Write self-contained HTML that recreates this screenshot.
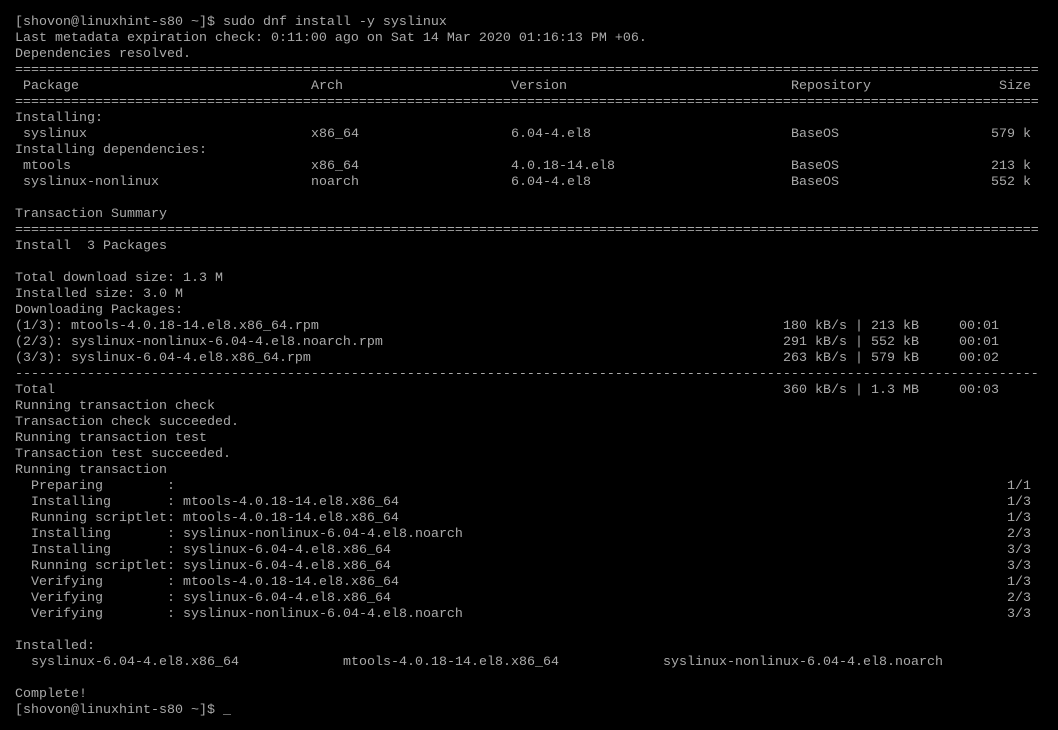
<!DOCTYPE html>
<html><head><meta charset="utf-8"><style>
html,body{margin:0;padding:0;background:#000;width:1058px;height:730px;overflow:hidden}
.t{position:absolute;left:0;top:15px;width:1058px;font-family:"Liberation Mono","DejaVu Sans Mono",monospace;font-size:13.333px;color:#aaaaaa;line-height:16px}
.l{position:relative;height:16px;white-space:pre}
.l span{position:absolute;top:0}
.r{right:27px}
</style></head><body><div class="t">
<div class="l"><span style="left:15px">[shovon@linuxhint-s80 ~]$ sudo dnf install -y syslinux</span></div>
<div class="l"><span style="left:15px">Last metadata expiration check: 0:11:00 ago on Sat 14 Mar 2020 01:16:13 PM +06.</span></div>
<div class="l"><span style="left:15px">Dependencies resolved.</span></div>
<div class="l"><span style="left:15px">================================================================================================================================</span></div>
<div class="l"><span style="left:23px">Package</span><span style="left:311px">Arch</span><span style="left:511px">Version</span><span style="left:791px">Repository</span><span class="r">Size</span></div>
<div class="l"><span style="left:15px">================================================================================================================================</span></div>
<div class="l"><span style="left:15px">Installing:</span></div>
<div class="l"><span style="left:23px">syslinux</span><span style="left:311px">x86_64</span><span style="left:511px">6.04-4.el8</span><span style="left:791px">BaseOS</span><span class="r">579 k</span></div>
<div class="l"><span style="left:15px">Installing dependencies:</span></div>
<div class="l"><span style="left:23px">mtools</span><span style="left:311px">x86_64</span><span style="left:511px">4.0.18-14.el8</span><span style="left:791px">BaseOS</span><span class="r">213 k</span></div>
<div class="l"><span style="left:23px">syslinux-nonlinux</span><span style="left:311px">noarch</span><span style="left:511px">6.04-4.el8</span><span style="left:791px">BaseOS</span><span class="r">552 k</span></div>
<div class="l"></div>
<div class="l"><span style="left:15px">Transaction Summary</span></div>
<div class="l"><span style="left:15px">================================================================================================================================</span></div>
<div class="l"><span style="left:15px">Install  3 Packages</span></div>
<div class="l"></div>
<div class="l"><span style="left:15px">Total download size: 1.3 M</span></div>
<div class="l"><span style="left:15px">Installed size: 3.0 M</span></div>
<div class="l"><span style="left:15px">Downloading Packages:</span></div>
<div class="l"><span style="left:15px">(1/3): mtools-4.0.18-14.el8.x86_64.rpm</span><span style="left:783px">180 kB/s | 213 kB</span><span style="left:959px">00:01</span></div>
<div class="l"><span style="left:15px">(2/3): syslinux-nonlinux-6.04-4.el8.noarch.rpm</span><span style="left:783px">291 kB/s | 552 kB</span><span style="left:959px">00:01</span></div>
<div class="l"><span style="left:15px">(3/3): syslinux-6.04-4.el8.x86_64.rpm</span><span style="left:783px">263 kB/s | 579 kB</span><span style="left:959px">00:02</span></div>
<div class="l"><span style="left:15px">--------------------------------------------------------------------------------------------------------------------------------</span></div>
<div class="l"><span style="left:15px">Total</span><span style="left:783px">360 kB/s | 1.3 MB</span><span style="left:959px">00:03</span></div>
<div class="l"><span style="left:15px">Running transaction check</span></div>
<div class="l"><span style="left:15px">Transaction check succeeded.</span></div>
<div class="l"><span style="left:15px">Running transaction test</span></div>
<div class="l"><span style="left:15px">Transaction test succeeded.</span></div>
<div class="l"><span style="left:15px">Running transaction</span></div>
<div class="l"><span style="left:31px">Preparing</span><span style="left:167px">:</span><span class="r">1/1</span></div>
<div class="l"><span style="left:31px">Installing</span><span style="left:167px">: mtools-4.0.18-14.el8.x86_64</span><span class="r">1/3</span></div>
<div class="l"><span style="left:31px">Running scriptlet: mtools-4.0.18-14.el8.x86_64</span><span class="r">1/3</span></div>
<div class="l"><span style="left:31px">Installing</span><span style="left:167px">: syslinux-nonlinux-6.04-4.el8.noarch</span><span class="r">2/3</span></div>
<div class="l"><span style="left:31px">Installing</span><span style="left:167px">: syslinux-6.04-4.el8.x86_64</span><span class="r">3/3</span></div>
<div class="l"><span style="left:31px">Running scriptlet: syslinux-6.04-4.el8.x86_64</span><span class="r">3/3</span></div>
<div class="l"><span style="left:31px">Verifying</span><span style="left:167px">: mtools-4.0.18-14.el8.x86_64</span><span class="r">1/3</span></div>
<div class="l"><span style="left:31px">Verifying</span><span style="left:167px">: syslinux-6.04-4.el8.x86_64</span><span class="r">2/3</span></div>
<div class="l"><span style="left:31px">Verifying</span><span style="left:167px">: syslinux-nonlinux-6.04-4.el8.noarch</span><span class="r">3/3</span></div>
<div class="l"></div>
<div class="l"><span style="left:15px">Installed:</span></div>
<div class="l"><span style="left:31px">syslinux-6.04-4.el8.x86_64</span><span style="left:343px">mtools-4.0.18-14.el8.x86_64</span><span style="left:663px">syslinux-nonlinux-6.04-4.el8.noarch</span></div>
<div class="l"></div>
<div class="l"><span style="left:15px">Complete!</span></div>
<div class="l"><span style="left:15px">[shovon@linuxhint-s80 ~]$ _</span></div>
</div></body></html>
